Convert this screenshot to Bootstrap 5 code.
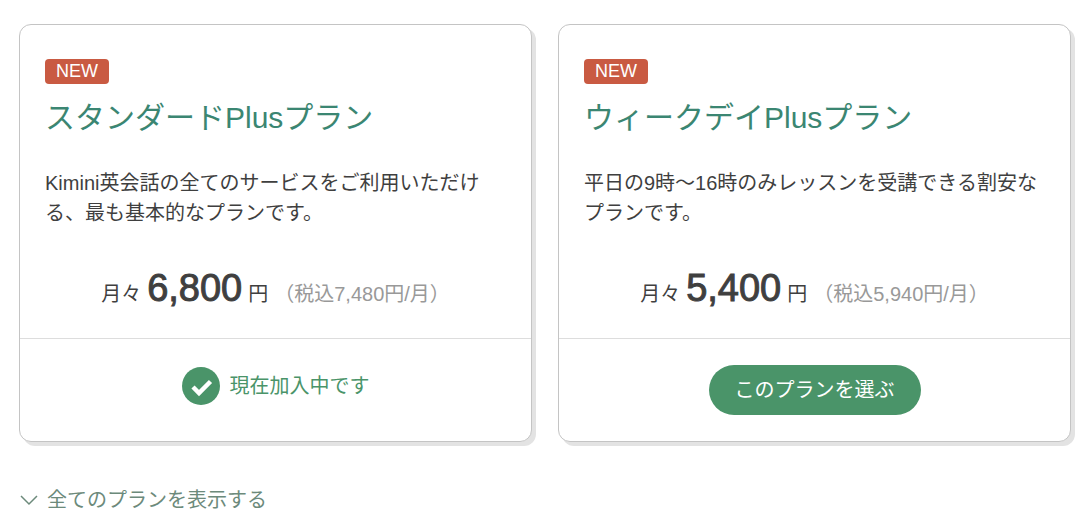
<!DOCTYPE html>
<html lang="ja">
<head>
<meta charset="utf-8">
<meta name="viewport" content="width=device-width, initial-scale=1">
<title>プラン選択</title>
<link href="https://cdn.jsdelivr.net/npm/bootstrap@5.3.0/dist/css/bootstrap.min.css" rel="stylesheet">
<style>
  body { font-family: "Liberation Sans", "Noto Sans CJK JP", sans-serif; font-size: 20px; line-height: 30px; color: #3f3f3f; }
  .plans { padding: 24px 19px 0; }
  .plan-grid { --bs-gutter-x: 26px; --bs-gutter-y: 26px; }
  .plan { border: 1px solid #c4c4c4; border-radius: 12px; box-shadow: 4px 4px 0 #e3e3e3; color: inherit; }
  .plan .card-body { padding: 34px 25px 19px; }
  .new-tag { background: #c95a42; border-radius: 4px; font-size: 18px; line-height: 25px; padding: 0 11px; }
  .plan-title { color: #3b8672; font-size: 30px; line-height: 40px; font-weight: 400; margin: 14px 0 30px; }
  .plan-text { margin-bottom: 35px; }
  .price { line-height: 50px; gap: 6px; }
  .amount { font-size: 38px; -webkit-text-stroke: 1px currentColor; }
  .tax { color: #999; }
  .plan .card-footer { min-height: 103px; padding: 26px; border-color: #ddd; }
  .joined { color: #4a9469; min-height: 42px; gap: 10px; }
  .choose { --bs-btn-color: #fff; --bs-btn-bg: #4a9469; --bs-btn-hover-color: #fff; --bs-btn-hover-bg: #3d7f59; --bs-btn-border-width: 0; --bs-btn-font-size: 20px; --bs-btn-line-height: 30px; --bs-btn-padding-x: 26px; --bs-btn-padding-y: 10px; }
  .all-plans { color: #6c8a7b; margin-top: 43px; }
</style>
</head>
<body>
<main class="container-fluid plans">
  <div class="row row-cols-2 plan-grid">
    <div class="col">
      <section class="card plan h-100">
        <div class="card-body">
          <span class="new-tag d-table text-white">NEW</span>
          <h2 class="plan-title">スタンダードPlusプラン</h2>
          <p class="plan-text">Kimini英会話の全てのサービスをご利用いただける、最も基本的なプランです。</p>
          <div class="price d-flex justify-content-center align-items-baseline"><span>月々</span><span class="amount">6,800</span><span>円</span><span class="tax">（税込7,480円/月）</span></div>
        </div>
        <div class="card-footer bg-transparent d-flex justify-content-center align-items-start">
          <span class="joined d-flex align-items-center"><svg width="38" height="38" viewBox="0 0 38 38" aria-hidden="true"><circle cx="19" cy="19" r="19" fill="#4a9469"/><path d="M11 20l6 6 11.500-11.500" fill="none" stroke="#fff" stroke-width="4.500"/></svg>現在加入中です</span>
        </div>
      </section>
    </div>
    <div class="col">
      <section class="card plan h-100">
        <div class="card-body">
          <span class="new-tag d-table text-white">NEW</span>
          <h2 class="plan-title">ウィークデイPlusプラン</h2>
          <p class="plan-text">平日の9時〜16時のみレッスンを受講できる割安なプランです。</p>
          <div class="price d-flex justify-content-center align-items-baseline"><span>月々</span><span class="amount">5,400</span><span>円</span><span class="tax">（税込5,940円/月）</span></div>
        </div>
        <div class="card-footer bg-transparent d-flex justify-content-center align-items-start">
          <button type="button" class="btn choose rounded-pill">このプランを選ぶ</button>
        </div>
      </section>
    </div>
  </div>
  <a href="#" class="all-plans d-inline-flex align-items-center gap-2 text-decoration-none"><svg width="20" height="12" viewBox="0 0 20 12" fill="none" stroke="currentColor" stroke-width="1.500" aria-hidden="true"><path d="M2 2l8 8 8-8"/></svg>全てのプランを表示する</a>
</main>
<script src="https://cdn.jsdelivr.net/npm/bootstrap@5.3.0/dist/js/bootstrap.bundle.min.js"></script>
</body>
</html>
